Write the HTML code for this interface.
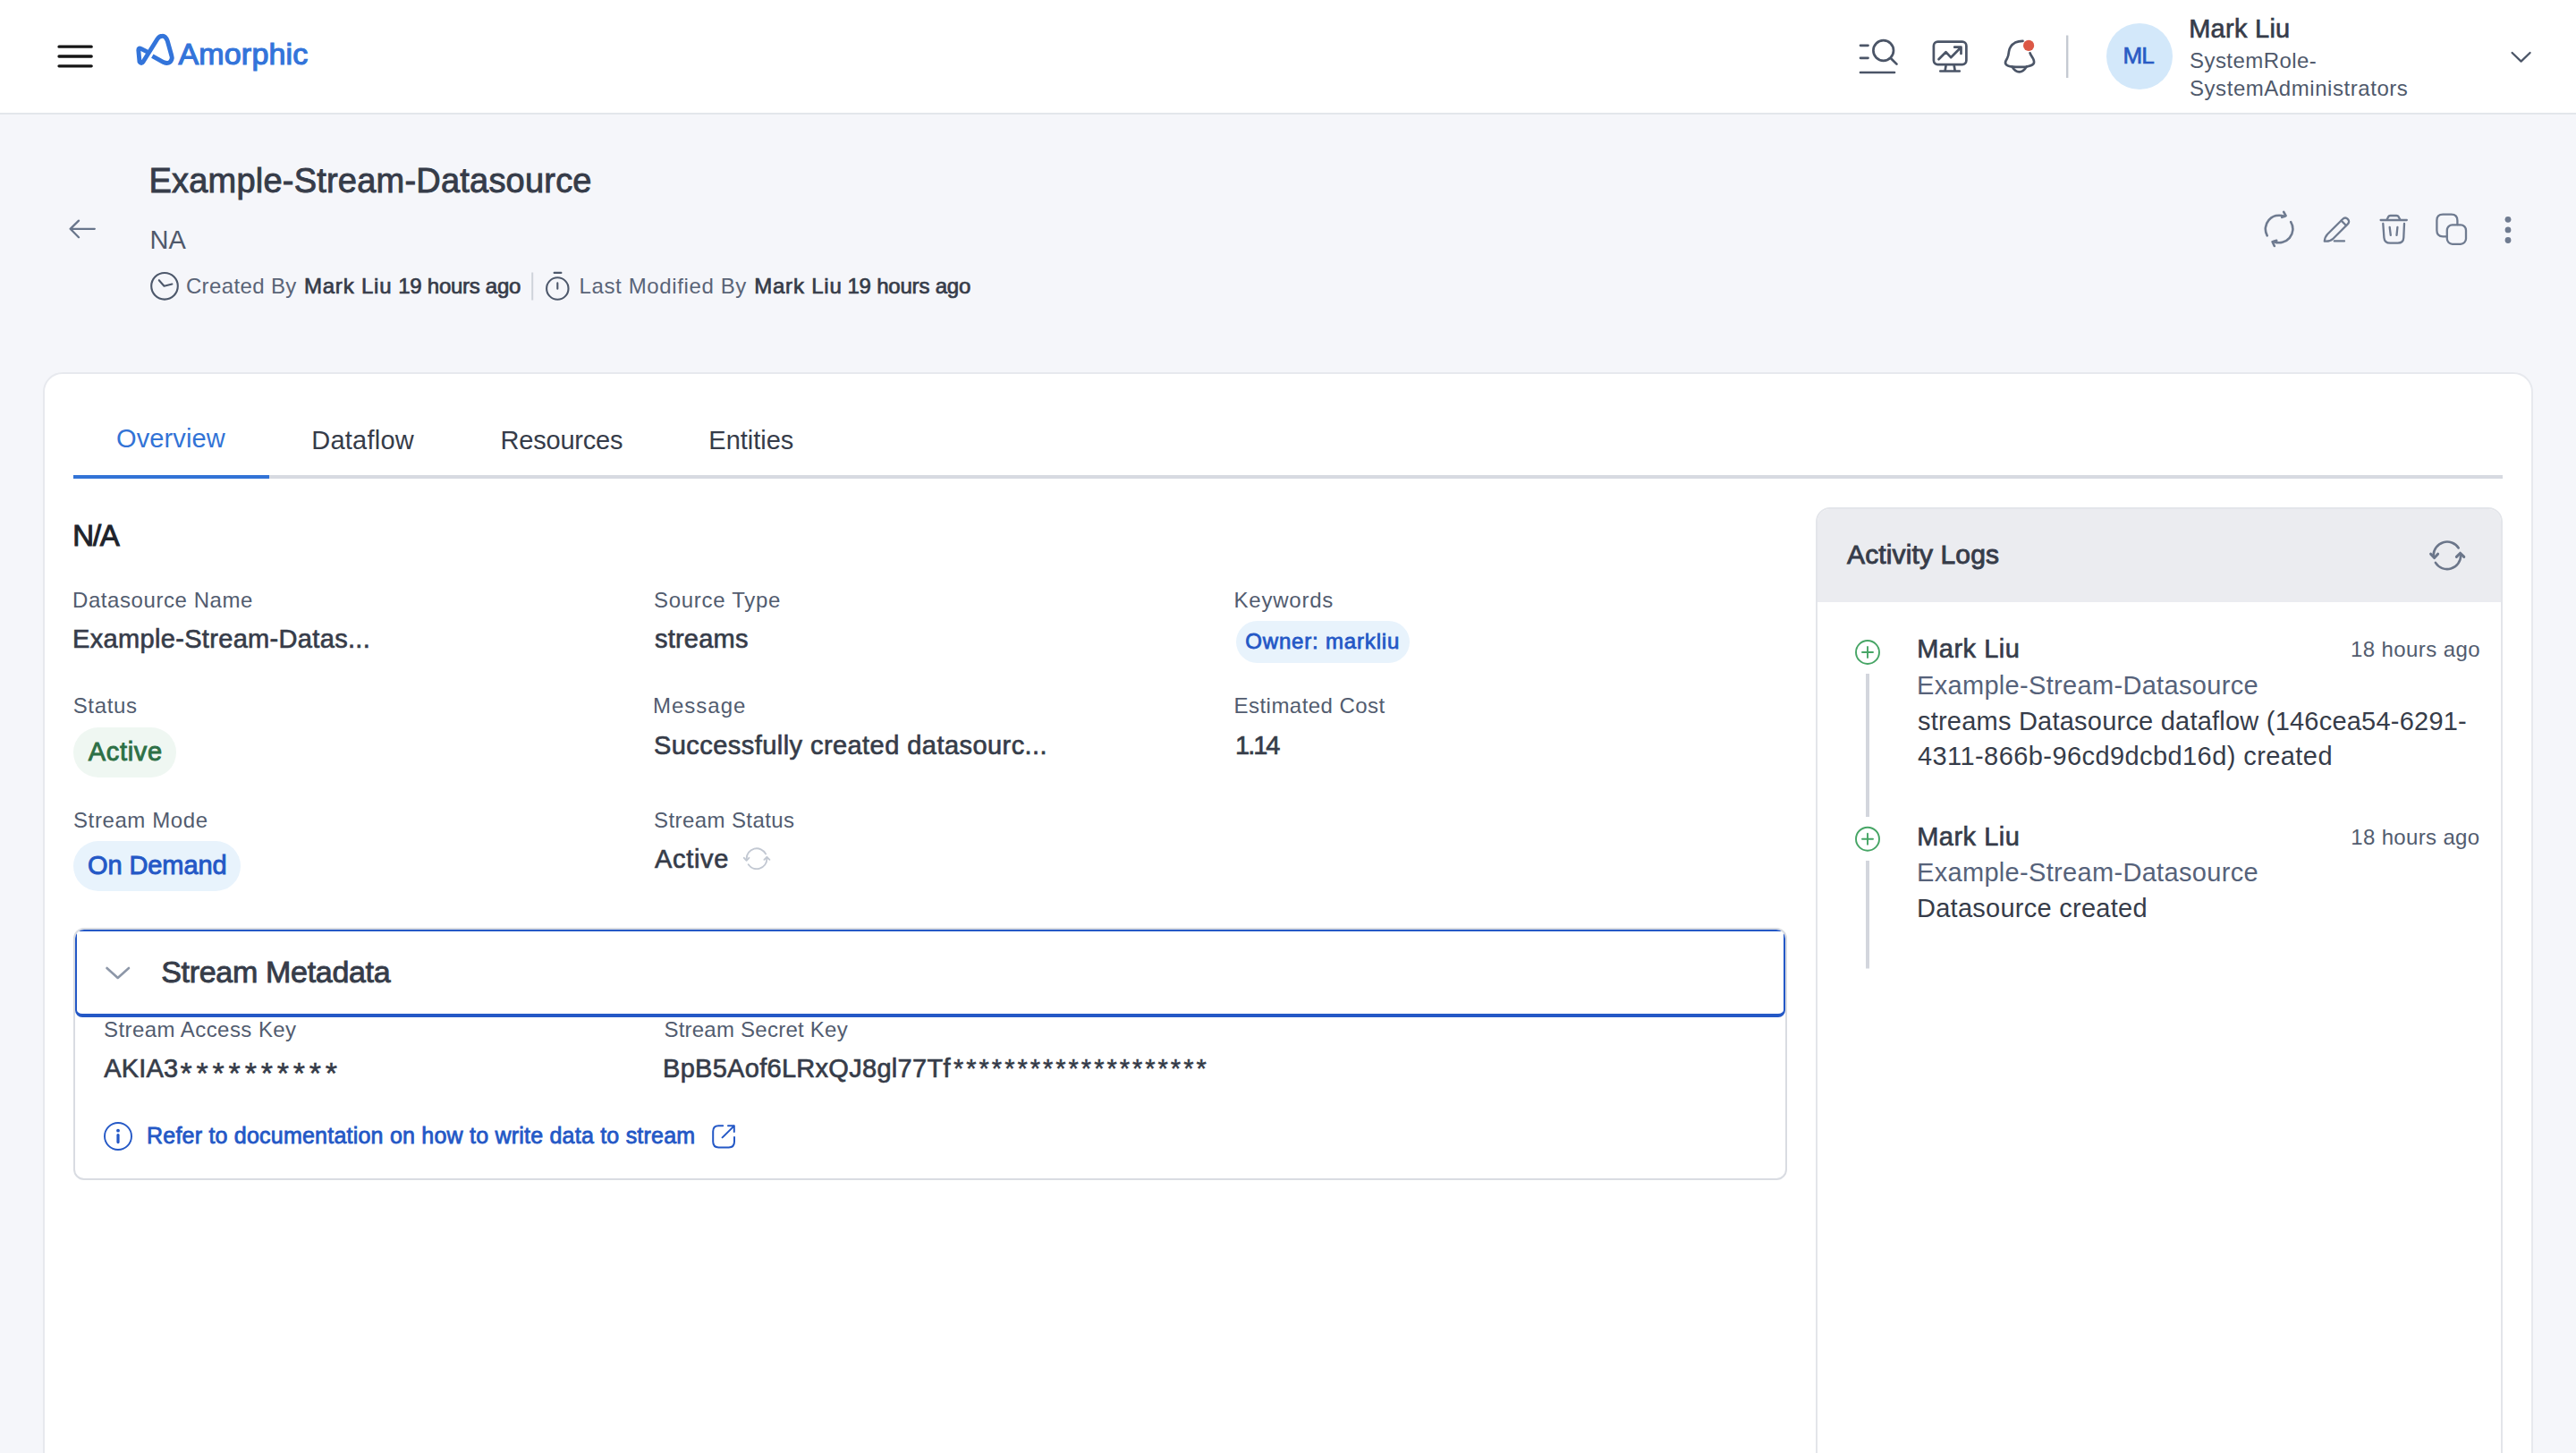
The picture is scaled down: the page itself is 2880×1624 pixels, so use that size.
<!DOCTYPE html>
<html><head><meta charset="utf-8"><style>
html,body{margin:0;padding:0;}
body{width:2880px;height:1624px;overflow:hidden;position:relative;background:#f5f6fa;font-family:"Liberation Sans",sans-serif;}
.t{position:absolute;white-space:pre;line-height:1;}
.b{position:absolute;box-sizing:border-box;}
.ov{position:absolute;left:0;top:0;}
</style></head><body>
<div class="b" style="left:0;top:0;width:2880px;height:126px;background:#fff;"></div>
<div class="b" style="left:0;top:126px;width:2880px;height:2px;background:#e3e6eb;"></div>
<div class="b" style="left:2354.6px;top:26px;width:74.4px;height:74.4px;border-radius:50%;background:#d3e8fa;"></div>
<div class="b" style="left:48px;top:416px;width:2784px;height:1400px;background:#fff;border:2px solid #e7e9ee;border-radius:22px;"></div>
<div class="b" style="left:82px;top:531px;width:2716px;height:4px;background:#d7dae1;"></div>
<div class="b" style="left:82px;top:531px;width:219px;height:4px;background:#3273d6;"></div>
<div class="b" style="left:1381.6px;top:693.8px;width:194px;height:47.4px;border-radius:24px;background:#e8f3fc;"></div>
<div class="b" style="left:82.3px;top:813.3px;width:114.5px;height:55.7px;border-radius:28px;background:#eff7f2;"></div>
<div class="b" style="left:82.3px;top:940px;width:186.3px;height:56.4px;border-radius:28px;background:#e8f3fc;"></div>
<div class="b" style="left:82px;top:1037px;width:1916px;height:282px;border:2px solid #d9dce2;border-radius:12px;overflow:hidden;"><div class="b" style="left:0;top:0;width:1912px;height:98px;border-style:solid;border-color:#2458c6;border-width:2px 2px 4px 2px;border-radius:2px 2px 8px 8px;"></div></div>
<div class="b" style="left:2030px;top:567px;width:768px;height:1200px;border:2px solid #e3e5ea;border-radius:16px;overflow:hidden;background:#fff;">
  <div style="position:absolute;left:0;top:0;right:0;height:104px;background:#ebecf0;"></div>
</div>

<svg class="ov" width="2880" height="1624" viewBox="0 0 2880 1624" fill="none" stroke-linecap="round" stroke-linejoin="round">
 <g stroke="#161616" stroke-width="3.3"><path d="M66 52.2H102.2M66 63H102.2M66 73.8H102.2"/></g>
 <path d="M170.3 62.6L182.8 69.6Q189.5 72.6 191.9 66.3Q192.6 64.5 191.9 62.5L187.2 45.6Q185 40 181.6 40.2Q178.2 40.2 176 43.5L160.2 68.8Q157.9 72.2 156 69L154.8 56Q154.8 53.2 157.6 54.4L165.4 58.4" stroke="#3374da" stroke-width="4.9" stroke-linecap="butt"/>
 <g stroke="#4b5567" stroke-width="2.7">
  <path d="M2080 50.8H2088.5M2080 64.8H2088.5M2080 81H2118"/>
  <circle cx="2105.7" cy="56.5" r="11.3"/>
  <path d="M2114.3 65.5L2120.5 71.6"/>
 </g>
 <g stroke="#4b5567" stroke-width="2.7">
  <rect x="2161.9" y="46.7" width="36.5" height="25.4" rx="4.5"/>
  <path d="M2175.5 73.6L2174.6 79.3M2184.8 73.6L2185.7 79.3M2169.3 79.5H2190.8"/>
  <path d="M2167.5 66.3L2175.5 58.2L2181.1 64.2L2192.5 52.7M2185.2 52.7H2192.5V59.9"/>
 </g>
 <g stroke="#4b5567" stroke-width="2.7">
  <path d="M2261.5 45.9Q2257 45.8 2253 47.6Q2247 50.8 2246 57.5Q2245.6 62.5 2243.8 65.8Q2241.2 69.5 2242.4 71.6Q2244.2 74.2 2250 74.6Q2257.5 75.3 2265 74.6Q2271.5 73.8 2273.6 71.2Q2275 68.6 2272.4 64.4Q2270 60.8 2269.6 59.4"/>
  <path d="M2249.6 74.6Q2253 80.4 2257.6 80.4Q2262.2 80.4 2265.6 74.6"/>
 </g>
 <circle cx="2268.1" cy="50.9" r="6.1" fill="#dc5846" stroke="none"/>
 <path d="M2311.2 39.5V87" stroke="#c5cad2" stroke-width="2.4" stroke-linecap="butt"/>
 <path d="M2808.6 59L2818.6 68.6L2828.6 59" stroke="#4b5567" stroke-width="2.3"/>
 <!-- back arrow -->
 <g stroke="#68758b" stroke-width="2.3"><path d="M78.6 255.8H105.8M78.6 255.8L88 246.6M78.6 255.8L88 265.2"/></g>
 <!-- clock -->
 <g stroke="#4d586b" stroke-width="2.1">
  <circle cx="184" cy="319.8" r="14.8"/>
  <path d="M177.8 313.2L183.5 319.8L192.4 317.6"/>
 </g>
 <path d="M595.2 304.5V335.5" stroke="#cfd3da" stroke-width="2" stroke-linecap="butt"/>
 <g stroke="#4d586b" stroke-width="2.1">
  <circle cx="623.3" cy="322.5" r="12.2"/>
  <path d="M619.6 304.9H627.4M623.3 316.4V322.8"/>
 </g>
 <!-- action icons -->
 <g stroke="#6f7b90" stroke-width="2.6">
  <path d="M2534.7 263.4A15.3 15.3 0 0 1 2553.8 241.8"/>
  <path d="M2553.2 236.8L2555.6 241.2L2551.2 242.8"/>
  <path d="M2561.2 248.1A15.3 15.3 0 0 1 2542.4 270.2"/>
  <path d="M2542.8 275.0L2540.6 270.2L2545.2 268.8"/>
 </g>
 <g stroke="#6f7b90" stroke-width="2.3">
  <path d="M2598.8 269.6Q2599.3 264.6 2602.4 261.5L2618.8 245.2Q2622 242.1 2624.8 244.9Q2627.6 247.7 2624.4 250.9L2608 267.2Q2604.8 270.2 2598.8 269.6Z"/>
  <path d="M2617.6 246.6L2623 252"/>
  <path d="M2609.8 269.4H2621"/>
 </g>
 <g stroke="#6f7b90" stroke-width="2.3">
  <path d="M2661.6 246H2690.8"/>
  <path d="M2668.6 245.4L2670.2 242.2Q2670.9 241 2672.4 241H2679.4Q2680.9 241 2681.6 242.2L2683.3 245.4"/>
  <path d="M2664.3 250L2665.4 265.6Q2665.9 271.6 2672.2 271.6H2680.8Q2687 271.6 2687.3 265.6L2688 250"/>
  <path d="M2671.7 254L2672.8 262.8M2680.4 254L2679.5 262.8"/>
 </g>
 <g stroke="#6f7b90" stroke-width="2.3">
  <path d="M2735.4 264.4H2731.2Q2724.4 264.4 2724.4 257.6V246.2Q2724.4 239.6 2731.2 239.6H2740.6Q2747.4 239.6 2747.4 246.4V251"/>
  <rect x="2735.8" y="251.4" width="21.2" height="21.4" rx="6"/>
 </g>
 <g fill="#6f7b90" stroke="none">
  <circle cx="2804" cy="245.3" r="3.4"/><circle cx="2804" cy="256.9" r="3.4"/><circle cx="2804" cy="268.5" r="3.4"/>
 </g>
 <!-- stream status refresh -->
 <g stroke="#c2c8d2" stroke-width="1.9">
  <path d="M834.6 959.8A11.4 11.4 0 0 1 856.1 954.4"/>
  <path d="M836.7 966.3A11.4 11.4 0 0 0 857.4 959.8"/>
  <path d="M831.8 958.8L834.6 961.8L837.4 958.8"/>
  <path d="M854.4 960.8L857.4 957.8L860.4 960.8"/>
 </g>
 <!-- chevron stream metadata -->
 <path d="M119.5 1082L131.7 1093L144 1082" stroke="#8d97a8" stroke-width="2.6"/>
 <!-- info -->
 <circle cx="132" cy="1270" r="15" stroke="#2458c6" stroke-width="1.9"/>
 <path d="M132 1268.6V1276.6" stroke="#2458c6" stroke-width="3.2"/>
 <circle cx="132" cy="1263.7" r="1.9" fill="#2458c6"/>
 <!-- external link -->
 <g stroke="#2458c6" stroke-width="2">
  <path d="M808.2 1258.2H803.5Q797.2 1258.2 797.2 1264.5V1276Q797.2 1282.4 803.5 1282.4H814.8Q821 1282.4 821 1276V1271"/>
  <path d="M807.6 1271.4L820.8 1258.4M814 1258.2H820.8V1265"/>
 </g>
 <!-- activity refresh -->
 <g stroke="#6b768a" stroke-width="2.6">
  <path d="M2720.6 620.8A15.3 15.3 0 0 1 2748.7 612.5"/>
  <path d="M2722.9 628.9A15.3 15.3 0 0 0 2751.2 620.8"/>
  <path d="M2717.6 619.2L2721.6 623.6L2725.6 619.2" stroke-width="3"/>
  <path d="M2746.4 622.4L2750.6 618.2L2754.8 622.4" stroke-width="3"/>
 </g>
 <!-- timeline -->
 <g stroke="#d3d6dd" stroke-width="4" stroke-linecap="butt">
  <path d="M2088 753V913M2088 962V1082.5"/>
 </g>
 <g stroke="#46a565" stroke-width="1.9">
  <circle cx="2088" cy="729" r="13"/><path d="M2082 729H2094M2088 723V735"/>
  <circle cx="2088" cy="937.7" r="13"/><path d="M2082 937.7H2094M2088 931.7V943.7"/>
 </g>
</svg>
<div class="t" style="left:2447.2px;top:18.4px;font-size:29px;letter-spacing:0.26px;color:#363c49;-webkit-text-stroke:0.65px currentColor;">Mark Liu</div>
<div class="t" style="left:2448.0px;top:55.6px;font-size:24px;letter-spacing:0.44px;color:#4f596b;">SystemRole-</div>
<div class="t" style="left:2448.0px;top:86.6px;font-size:24px;letter-spacing:0.55px;color:#4f596b;">SystemAdministrators</div>
<div class="t" style="left:199.4px;top:43.2px;font-size:34px;letter-spacing:0.19px;color:#3374da;-webkit-text-stroke:1.2px currentColor;">Amorphic</div>
<div class="t" style="left:166.5px;top:183.3px;font-size:38px;letter-spacing:0.21px;color:#363c49;-webkit-text-stroke:0.9px currentColor;">Example-Stream-Datasource</div>
<div class="t" style="left:167.5px;top:253.9px;font-size:29px;letter-spacing:0.0px;color:#4f596b;">NA</div>
<div class="t" style="left:207.9px;top:308.4px;font-size:24px;letter-spacing:0.37px;color:#5a6477;">Created By</div>
<div class="t" style="left:339.9px;top:308.4px;font-size:24px;letter-spacing:0.81px;color:#363c49;-webkit-text-stroke:0.7px currentColor;">Mark Liu</div>
<div class="t" style="left:445.3px;top:308.4px;font-size:24px;letter-spacing:-0.28px;color:#363c49;-webkit-text-stroke:0.7px currentColor;">19 hours ago</div>
<div class="t" style="left:647.5px;top:308.4px;font-size:24px;letter-spacing:0.63px;color:#5a6477;">Last Modified By</div>
<div class="t" style="left:843.2px;top:308.4px;font-size:24px;letter-spacing:0.79px;color:#363c49;-webkit-text-stroke:0.7px currentColor;">Mark Liu</div>
<div class="t" style="left:947.4px;top:308.4px;font-size:24px;letter-spacing:-0.2px;color:#363c49;-webkit-text-stroke:0.7px currentColor;">19 hours ago</div>
<div class="t" style="left:130.1px;top:476.0px;font-size:29px;letter-spacing:0.1px;color:#3273d6;">Overview</div>
<div class="t" style="left:348.3px;top:477.7px;font-size:29px;letter-spacing:0.23px;color:#363c49;">Dataflow</div>
<div class="t" style="left:559.5px;top:477.7px;font-size:29px;letter-spacing:-0.2px;color:#363c49;">Resources</div>
<div class="t" style="left:792.3px;top:477.7px;font-size:29px;letter-spacing:-0.01px;color:#363c49;">Entities</div>
<div class="t" style="left:81.3px;top:582.3px;font-size:33px;letter-spacing:-1.25px;color:#1e232b;-webkit-text-stroke:1.0px currentColor;">N/A</div>
<div class="t" style="left:81.0px;top:658.8px;font-size:24px;letter-spacing:0.57px;color:#525c6f;">Datasource Name</div>
<div class="t" style="left:731.0px;top:658.5px;font-size:24px;letter-spacing:0.7px;color:#525c6f;">Source Type</div>
<div class="t" style="left:1379.6px;top:658.6px;font-size:24px;letter-spacing:0.76px;color:#525c6f;">Keywords</div>
<div class="t" style="left:81.0px;top:699.9px;font-size:29px;letter-spacing:0.33px;color:#363c49;-webkit-text-stroke:0.65px currentColor;">Example-Stream-Datas...</div>
<div class="t" style="left:732.0px;top:699.8px;font-size:29px;letter-spacing:0.22px;color:#363c49;-webkit-text-stroke:0.65px currentColor;">streams</div>
<div class="t" style="left:1392.3px;top:705.0px;font-size:24px;letter-spacing:0.82px;color:#2458c6;-webkit-text-stroke:0.8px currentColor;">Owner: markliu</div>
<div class="t" style="left:81.7px;top:776.9px;font-size:24px;letter-spacing:0.66px;color:#525c6f;">Status</div>
<div class="t" style="left:730.0px;top:777.3px;font-size:24px;letter-spacing:1.0px;color:#525c6f;">Message</div>
<div class="t" style="left:1379.6px;top:777.4px;font-size:24px;letter-spacing:0.45px;color:#525c6f;">Estimated Cost</div>
<div class="t" style="left:98.8px;top:825.9px;font-size:29px;letter-spacing:0.68px;color:#2d7046;-webkit-text-stroke:0.9px currentColor;">Active</div>
<div class="t" style="left:731.0px;top:818.8px;font-size:29px;letter-spacing:0.44px;color:#363c49;-webkit-text-stroke:0.65px currentColor;">Successfully created datasourc...</div>
<div class="t" style="left:1381.0px;top:819.2px;font-size:29px;letter-spacing:-2.0px;color:#363c49;-webkit-text-stroke:0.65px currentColor;">1.14</div>
<div class="t" style="left:82.0px;top:904.6px;font-size:24px;letter-spacing:0.6px;color:#525c6f;">Stream Mode</div>
<div class="t" style="left:731.0px;top:904.9px;font-size:24px;letter-spacing:0.41px;color:#525c6f;">Stream Status</div>
<div class="t" style="left:98.0px;top:953.2px;font-size:29px;letter-spacing:-0.09px;color:#2458c6;-webkit-text-stroke:0.9px currentColor;">On Demand</div>
<div class="t" style="left:732.0px;top:945.5px;font-size:29px;letter-spacing:0.68px;color:#363c49;-webkit-text-stroke:0.65px currentColor;">Active</div>
<div class="t" style="left:180.2px;top:1068.5px;font-size:34px;letter-spacing:-0.31px;color:#363c49;-webkit-text-stroke:0.9px currentColor;">Stream Metadata</div>
<div class="t" style="left:116.0px;top:1139.0px;font-size:24px;letter-spacing:0.44px;color:#525c6f;">Stream Access Key</div>
<div class="t" style="left:742.4px;top:1139.0px;font-size:24px;letter-spacing:0.24px;color:#525c6f;">Stream Secret Key</div>
<div class="t" style="left:116.3px;top:1180.0px;font-size:29px;letter-spacing:0.13px;color:#363c49;-webkit-text-stroke:0.65px currentColor;">AKIA3</div>
<div class="t" style="left:741.0px;top:1179.6px;font-size:29px;letter-spacing:0.29px;color:#363c49;-webkit-text-stroke:0.65px currentColor;">BpB5Aof6LRxQJ8gl77Tf</div>
<div class="t" style="left:164.0px;top:1257.3px;font-size:25px;letter-spacing:0.22px;color:#2458c6;-webkit-text-stroke:0.8px currentColor;">Refer to documentation on how to write data to stream</div>
<div class="t" style="left:2065.0px;top:605.2px;font-size:30px;letter-spacing:0.13px;color:#363c49;-webkit-text-stroke:0.9px currentColor;">Activity Logs</div>
<div class="t" style="left:2143.2px;top:711.4px;font-size:29px;letter-spacing:0.49px;color:#363c49;-webkit-text-stroke:0.65px currentColor;">Mark Liu</div>
<div class="t" style="left:2628.0px;top:714.0px;font-size:24px;letter-spacing:0.4px;color:#525c6f;">18 hours ago</div>
<div class="t" style="left:2143.0px;top:752.1px;font-size:29px;letter-spacing:0.32px;color:#56627a;">Example-Stream-Datasource</div>
<div class="t" style="left:2144.0px;top:791.7px;font-size:29px;letter-spacing:0.22px;color:#363c49;">streams Datasource dataflow (146cea54-6291-</div>
<div class="t" style="left:2144.0px;top:831.3px;font-size:29px;letter-spacing:0.42px;color:#363c49;">4311-866b-96cd9dcbd16d) created</div>
<div class="t" style="left:2143.2px;top:920.5px;font-size:29px;letter-spacing:0.49px;color:#363c49;-webkit-text-stroke:0.65px currentColor;">Mark Liu</div>
<div class="t" style="left:2628.3px;top:923.7px;font-size:24px;letter-spacing:0.34px;color:#525c6f;">18 hours ago</div>
<div class="t" style="left:2143.0px;top:960.7px;font-size:29px;letter-spacing:0.32px;color:#56627a;">Example-Stream-Datasource</div>
<div class="t" style="left:2143.0px;top:1001.0px;font-size:29px;letter-spacing:0.26px;color:#363c49;">Datasource created</div>
<div class="t" style="left:2373.4px;top:49.4px;font-size:26px;letter-spacing:-0.8px;color:#2a5bc4;-webkit-text-stroke:0.7px currentColor;">ML</div>
<div class="t" style="left:201.5px;top:1181.5px;font-size:34px;letter-spacing:4.8px;color:#353b48;-webkit-text-stroke:0.5px currentColor">**********</div>
<div class="t" style="left:1066px;top:1179.5px;font-size:29px;letter-spacing:3.0px;color:#353b48;-webkit-text-stroke:0.5px currentColor">********************</div>
<script>(function(){var w=window.innerWidth;if(w&&Math.abs(w-2880)>2){document.documentElement.style.zoom=w/2880;}})();</script>
</body></html>
